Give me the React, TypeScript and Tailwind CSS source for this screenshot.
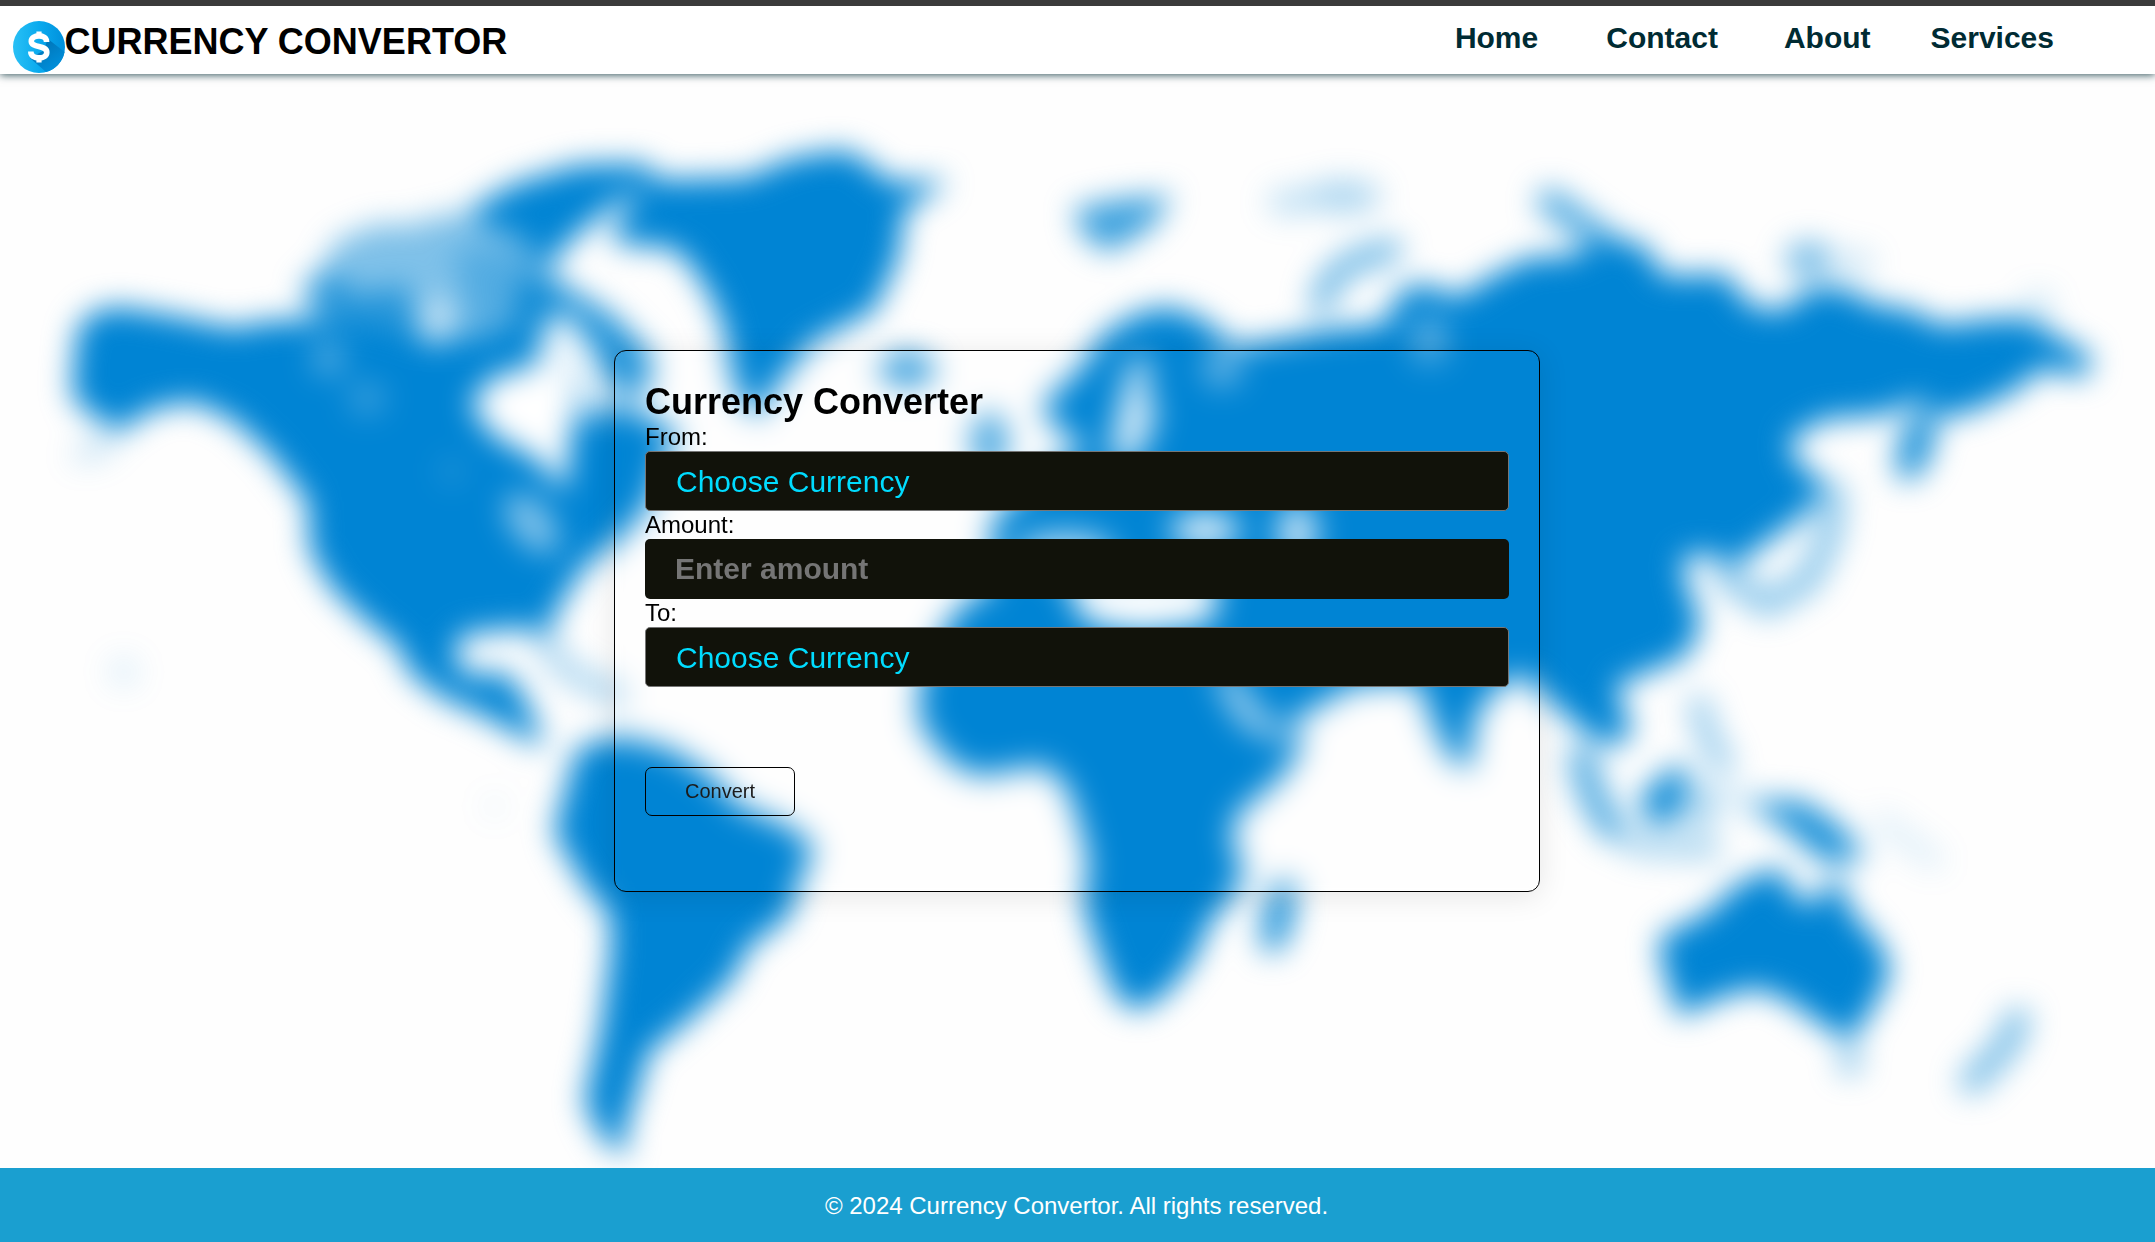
const NAV_LINKS = [
  { label: "Home", spacing: "mr-[68px]" },
  { label: "Contact", spacing: "mr-[66px]" },
  { label: "About", spacing: "mr-[60px]" },
  { label: "Services", spacing: "mr-[101px]" },
];

function WorldMap() {
  return (
    <svg
      className="pointer-events-none absolute inset-0 h-full w-full blur-[15px]"
      viewBox="0 0 1568 904"
      preserveAspectRatio="none"
      aria-hidden="true"
    >
      <g fill="#0084d4" stroke="none">
        {/* North America */}
        <path d="M56 240 L68 227 L86 223 L127 230 L170 239 L200 233 L220 234 L260 236 L310 247 L350 245 L377 236 L400 238 L425 262 L424 300 L432 296 L446 292 L474 305 L495 316 L484 330 L474 365 L455 388 L424 414 L404 446 L399 464 L385 457 L340 461 L330 472 L336 488 L350 493 L362 487 L378 501 L388 522 L397 545 L372 532 L350 520 L322 508 L298 490 L290 471 L267 453 L241 428 L225 400 L224 366 L197 331 L170 306 L140 292 L110 298 L87 314 L62 299 L52 287 L54 263 Z" />
        {/* Canadian archipelago */}
        <path opacity="0.5" d="M224 215 L245 175 L275 163 L300 164 L318 157 L345 155 L384 166 L405 195 L390 240 L334 247 L220 236 Z" />
        <path opacity="0.7" d="M218 208 L243 195 L255 214 L297 208 L306 245 L250 245 Z" />
        <path opacity="0.35" d="M330 180 L405 180 L395 238 L340 238 Z" />
        <path d="M341 153 L374 134 L421 120 L468 119 L480 131 L446 149 L416 174 L400 192 L377 172 L350 162 Z" />
        <path opacity="0.9" d="M375 204 L408 206 L446 230 L474 258 L471 288 L444 285 L431 253 L408 234 L377 238 Z" />
        {/* Greenland */}
        <path d="M444 172 L461 145 L477 131 L543 129 L576 115 L614 109 L634 120 L646 132 L690 132 L658 153 L654 187 L636 226 L590 250 L566 280 L551 304 L534 282 L527 240 L516 214 L498 187 L483 179 L459 179 Z" />
        <ellipse cx="660" cy="269" rx="20" ry="12" opacity="0.85" />
        {/* South America */}
        <path d="M424 542 L453 536 L487 545 L516 563 L537 586 L573 601 L593 617 L582 640 L574 667 L545 689 L532 714 L503 741 L472 766 L463 798 L455 822 L456 842 L438 829 L425 803 L437 748 L444 694 L444 667 L424 643 L403 606 L411 576 L418 551 Z" />
        {/* Africa */}
        <path d="M948 541 L934 564 L900 593 L896 611 L905 633 L900 648 L880 672 L870 696 L851 721 L829 736 L813 727 L801 699 L788 660 L792 626 L784 596 L775 571 L758 557 L712 565 L690 554 L669 527 L669 496 L689 454 L707 433 L775 429 L792 450 L830 458 L880 452 L925 500 Z" />
        <ellipse cx="930" cy="667" rx="11" ry="28" opacity="0.88" transform="rotate(13 930 667)" />
        {/* Eurasia */}
        <path d="M758 295 L785 269 L803 243 L826 229 L848 223 L871 230 L900 252 L935 246 L968 240 L1008 236 L1017 214 L1033 206 L1062 216 L1085 201 L1114 187 L1140 187 L1163 176 L1195 177 L1211 201 L1255 199 L1274 223 L1298 226 L1316 210 L1340 209 L1365 222 L1389 225 L1413 237 L1450 232 L1477 232 L1499 247 L1523 260 L1516 275 L1486 268 L1465 285 L1435 299 L1413 304 L1395 291 L1371 302 L1328 305 L1302 320 L1307 336 L1328 351 L1316 372 L1292 390 L1262 412 L1240 402 L1223 408 L1228 427 L1238 455 L1226 478 L1195 491 L1176 499 L1178 509 L1188 530 L1176 544 L1154 534 L1124 507 L1111 492 L1092 497 L1073 522 L1070 560 L1054 551 L1040 520 L1032 496 L985 499 L940 525 L915 532 L880 470 L872 432 L720 436 L722 378 L765 340 L790 325 L768 312 Z" />
        <path opacity="0.78" d="M781 152 L815 145 L853 142 L838 165 L806 184 L788 171 Z" />
        <ellipse cx="938" cy="147" rx="16" ry="10" opacity="0.24" />
        <ellipse cx="977" cy="143" rx="28" ry="12" opacity="0.32" />
        <ellipse cx="720" cy="322" rx="13" ry="22" opacity="0.75" />
        <ellipse cx="1394" cy="324" rx="12" ry="27" opacity="0.92" transform="rotate(18 1394 324)" />
        <ellipse cx="1316" cy="189" rx="17" ry="13" opacity="0.55" />
        <ellipse cx="1350" cy="191" rx="14" ry="9" opacity="0.2" />
        <ellipse cx="1483" cy="220" rx="12" ry="8" opacity="0.18" />
        {/* Indonesia and New Guinea */}
        <path opacity="0.97" d="M1192 581 L1222 554 L1229 571 L1218 599 L1202 601 Z" />
        <ellipse cx="1237" cy="590" rx="10" ry="17" opacity="0.35" />
        <path opacity="0.93" d="M1272 583 L1312 583 L1338 601 L1358 625 L1328 628 L1304 607 Z" />
        {/* Australia */}
        <path d="M1208 682 L1243 664 L1265 643 L1294 631 L1309 656 L1323 656 L1335 634 L1348 665 L1368 687 L1376 707 L1362 735 L1346 758 L1327 747 L1302 729 L1278 719 L1250 727 L1222 740 L1214 717 L1208 696 Z" />
        <ellipse cx="1346" cy="772" rx="8" ry="11" opacity="0.5" />
        {/* Small Pacific and Aleutian islands */}
        <ellipse cx="90" cy="489" rx="11" ry="11" opacity="0.12" />
        <ellipse cx="360" cy="587" rx="9" ry="9" opacity="0.06" />
        <ellipse cx="70" cy="326" rx="19" ry="8" opacity="0.2" transform="rotate(-25 70 326)" />
      </g>

      <g fill="none" stroke="#0084d4" strokeLinecap="round" strokeLinejoin="round">
        <path d="M961 221 L968 203 L985 190 L1012 182" strokeWidth="16" opacity="0.6" />
        <path d="M1128 147 L1172 179" strokeWidth="19" opacity="0.7" />
        <path d="M1334 360 L1331 390 L1316 422 L1286 440 L1255 419" strokeWidth="18" opacity="0.45" />
        <path d="M1151 552 L1158 578 L1171 600" strokeWidth="19" opacity="0.7" />
        <path d="M1175 606 L1194 616 L1245 618" strokeWidth="15" opacity="0.34" />
        <path d="M1236 513 L1242 535 L1254 556" strokeWidth="15" opacity="0.42" />
        <path d="M1240 575 L1290 590" strokeWidth="16" opacity="0.15" />
        <path d="M1369 598 L1407 626" strokeWidth="15" opacity="0.12" />
        <path d="M1468 743 L1460 761 L1435 787" strokeWidth="19" opacity="0.5" />
        <path d="M396 468 L412 488 L448 506" strokeWidth="16" opacity="0.32" />
      </g>

      {/* Inland seas, bays and lakes */}
      <g fill="#ffffff">
        <path d="M342 294 L359 274 L386 267 L408 266 L422 290 L415 315 L412 358 L392 335 L359 317 Z" />
        <path opacity="0.9" d="M386 275 L396 237 L411 226 L428 250 L428 280 Z" />
        <path opacity="0.4" d="M424 285 L450 278 L448 300 L424 312 Z" />
        <ellipse cx="318" cy="234" rx="11" ry="18" opacity="0.6" />
        <ellipse cx="239" cy="261" rx="12" ry="13" opacity="0.3" />
        <ellipse cx="267" cy="290" rx="14" ry="13" opacity="0.2" />
        <ellipse cx="329" cy="343" rx="10" ry="11" opacity="0.11" />
        <ellipse cx="387" cy="381" rx="14" ry="26" opacity="0.5" transform="rotate(-40 387 381)" />
        <path opacity="0.85" d="M824 260 L837 262 L834 285 L842 300 L829 334 L807 337 L813 300 Z" />
        <ellipse cx="889" cy="268" rx="14" ry="13" opacity="0.42" />
        <ellipse cx="1040" cy="247" rx="14" ry="18" opacity="0.33" />
        <ellipse cx="877" cy="386" rx="25" ry="13" opacity="0.9" />
        <ellipse cx="944" cy="388" rx="14" ry="22" opacity="0.8" />
        <ellipse cx="775" cy="402" rx="36" ry="14" opacity="0.7" />
        <path d="M773 418 L887 418 L882 453 L830 460 L790 453 Z" />
        <path d="M882 490 L898 490 L914 515 L940 535 L930 540 L903 527 Z" opacity="0.7" />
      </g>
    </svg>
  );
}

function DollarLogo() {
  return (
    <svg className="h-[52px] w-[52px] shrink-0" viewBox="0 0 52 52" aria-hidden="true">
      <defs>
        <linearGradient id="coin" x1="0" y1="0" x2="1" y2="0">
          <stop offset="0" stopColor="#29c0f5" />
          <stop offset="0.5" stopColor="#0aaaee" />
          <stop offset="1" stopColor="#0090dc" />
        </linearGradient>
        <linearGradient id="fold" x1="0.2" y1="0.1" x2="0.8" y2="0.9">
          <stop offset="0" stopColor="#0072b4" />
          <stop offset="1" stopColor="#0090dc" />
        </linearGradient>
      </defs>
      <circle cx="26" cy="26" r="26" fill="url(#coin)" />
      <path d="M35 18 L51.6 31 A26 26 0 0 1 33 51 L17 37 L30 30 Z" fill="url(#fold)" />
      <path
        d="M33.6 21 C33.6 16.5 30 14.9 26 14.9 C21.5 14.9 18.3 16.8 18.3 20.2 C18.3 27.5 33.8 23.4 33.8 31.2 C33.8 35 30.4 36.9 26 36.9 C21.4 36.9 17.8 34.9 17.8 30.6"
        fill="none"
        stroke="#ffffff"
        strokeWidth="5.6"
      />
      <path d="M23.4 10.5 H28.6 V16 H23.4 Z M23.4 36 H28.6 V41.6 H23.4 Z" fill="#ffffff" />
    </svg>
  );
}

function CurrencySelect({ id }: { id: string }) {
  return (
    <select
      id={id}
      defaultValue=""
      className="h-[60px] w-full appearance-none rounded-[5px] border border-[#767676] bg-[#11120a] px-[30px] pt-0.5 text-[30px] leading-[40px] text-[#00dcff] outline-none"
    >
      <option value="">Choose Currency</option>
    </select>
  );
}

function ConverterCard() {
  return (
    <form
      onSubmit={(event) => event.preventDefault()}
      className="mr-px flex h-[542px] w-[926px] flex-col rounded-[12px] border border-black p-[30px] text-black shadow-[0_4px_30px_rgba(0,0,0,0.1)] backdrop-blur-[5px]"
    >
      <h2 className="h-[42px] text-[36px] leading-[42px] font-bold">Currency Converter</h2>
      <label htmlFor="from" className="text-[24px] leading-[28px]">From:</label>
      <CurrencySelect id="from" />
      <label htmlFor="amount" className="text-[24px] leading-[28px]">Amount:</label>
      <input
        id="amount"
        placeholder="Enter amount"
        className="h-[60px] w-full rounded-[5px] bg-[#11120a] px-[30px] text-[30px] font-bold text-[#00dcff] outline-none placeholder:text-[#757575]"
      />
      <label htmlFor="to" className="text-[24px] leading-[28px]">To:</label>
      <CurrencySelect id="to" />
      <button
        type="submit"
        className="mt-20 h-[49px] w-[150px] rounded-[7px] border border-black pb-0.5 text-[20px] text-[#1b1b1b]"
      >
        Convert
      </button>
    </form>
  );
}

export default function App() {
  return (
    <div className="relative isolate flex h-[1242px] w-full flex-col overflow-hidden bg-[#fefefe] font-['Liberation_Sans',Arial,sans-serif]">
      <WorldMap />
      <header className="relative z-10 flex h-[74px] items-start justify-between border-t-[6px] border-[#3b3b3b] bg-white shadow-[0_1px_8px_rgba(0,43,51,0.8)]">
        <div className="flex items-start pl-[12.5px]">
          <div className="pt-[15px]">
            <DollarLogo />
          </div>
          <h1 className="mt-[15px] text-[36px] leading-[41px] font-bold text-black">CURRENCY CONVERTOR</h1>
        </div>
        <nav className="flex pt-[14px] text-[30px] leading-[35px] font-bold text-[#002b33]">
          {NAV_LINKS.map((link) => (
            <a key={link.label} href="#" className={link.spacing}>
              {link.label}
            </a>
          ))}
        </nav>
      </header>
      <main className="relative flex flex-1 items-center justify-center">
        <ConverterCard />
      </main>
      <footer className="relative flex h-[74px] items-center justify-center bg-[#1a9fd0] pt-0.5 pr-0.5 text-[24px] text-white">
        <p>© 2024 Currency Convertor. All rights reserved.</p>
      </footer>
    </div>
  );
}
